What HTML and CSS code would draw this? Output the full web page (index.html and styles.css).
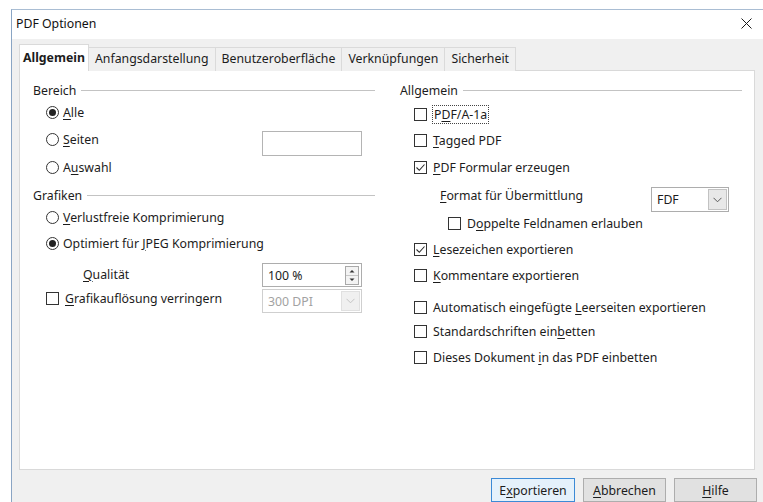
FILE: index.html
```html
<!DOCTYPE html>
<html lang="de">
<head>
<meta charset="utf-8">
<title>PDF Optionen</title>
<link rel="stylesheet" href="styles.css">
</head>
<body>
<div class="window">
  <div class="titlebar">
    <span class="title">PDF Optionen</span>
    <svg class="close" width="11" height="11" viewBox="0 0 11 11"><path d="M0.5 0.5 L10.5 10.5 M10.5 0.5 L0.5 10.5" stroke="#1a1a1a" stroke-width="1" fill="none"/></svg>
  </div>

  <div class="tabs">
    <div class="tab active">Allgemein</div>
    <div class="tab">Anfangsdarstellung</div>
    <div class="tab">Benutzeroberfläche</div>
    <div class="tab">Verknüpfungen</div>
    <div class="tab">Sicherheit</div>
  </div>

  <div class="panel">
    <!-- Bereich / Grafiken -->
    <div class="col col-left">
      <div class="heading full"><span>Bereich</span><i></i></div>
      <label class="opt radio-opt full"><span class="rb on"></span><span><u>A</u>lle</span></label>
      <label class="opt radio-opt lead"><span class="rb"></span><span><u>S</u>eiten</span></label>
      <div class="textbox pages"></div>
      <label class="opt radio-opt full"><span class="rb"></span><span>A<u>u</u>swahl</span></label>
      <div class="heading full"><span>Grafiken</span><i></i></div>
      <label class="opt radio-opt full"><span class="rb"></span><span><u>V</u>erlustfreie Komprimierung</span></label>
      <label class="opt radio-opt full"><span class="rb on"></span><span>Optimiert für <u>J</u>PEG Komprimierung</span></label>
      <div class="opt quality lead"><span><u>Q</u>ualität</span></div>
      <div class="spin">
        <span>100 %</span>
        <svg class="spin-btns" width="14" height="19" viewBox="0 0 14 19">
          <rect x="0.5" y="0.5" width="13" height="18" fill="#f3f3f3" stroke="#a9a9a9"/>
          <path d="M1 9.5 H13" stroke="#c8c8c8"/>
          <path d="M4.5 6.5 L7 4 L9.5 6.5 Z" fill="#333"/>
          <path d="M4.5 12.5 L7 15 L9.5 12.5 Z" fill="#333"/>
        </svg>
      </div>
      <label class="opt check-opt lead"><span class="cb"></span><span><u>G</u>rafikauflösung verringern</span></label>
      <div class="combo disabled dpi">
        <span>300 DPI</span>
        <span class="combo-btn"><svg width="9" height="6" viewBox="0 0 9 6"><path d="M0.5 0.8 L4.5 4.8 L8.5 0.8" stroke="#c4c4c4" fill="none"/></svg></span>
      </div>
    </div>

    <!-- Allgemein -->
    <div class="col col-right">
      <div class="heading full"><span>Allgemein</span><i></i></div>
      <label class="opt check-opt full"><span class="cb"></span><span class="focus">P<u>D</u>F/A-1a</span></label>
      <label class="opt check-opt full"><span class="cb"></span><span><u>T</u>agged PDF</span></label>
      <label class="opt check-opt full"><span class="cb on"><svg width="11" height="11" viewBox="0 0 11 11"><path d="M1.5 5.5 L4.3 8.3 L9.5 2.5" stroke="#2b2b2b" stroke-width="1.1" fill="none"/></svg></span><span><u>P</u>DF Formular erzeugen</span></label>
      <div class="opt format lead"><span><u>F</u>ormat für Übermittlung</span></div>
      <div class="combo fdf">
        <span>FDF</span>
        <span class="combo-btn"><svg width="9" height="6" viewBox="0 0 9 6"><path d="M0.5 0.8 L4.5 4.8 L8.5 0.8" stroke="#5a5a5a" fill="none"/></svg></span>
      </div>
      <label class="opt check-opt sub full"><span class="cb"></span><span>D<u>o</u>ppelte Feldnamen erlauben</span></label>
      <label class="opt check-opt full"><span class="cb on"><svg width="11" height="11" viewBox="0 0 11 11"><path d="M1.5 5.5 L4.3 8.3 L9.5 2.5" stroke="#2b2b2b" stroke-width="1.1" fill="none"/></svg></span><span><u>L</u>esezeichen exportieren</span></label>
      <label class="opt check-opt full"><span class="cb"></span><span><u>K</u>ommentare exportieren</span></label>
      <label class="opt check-opt full"><span class="cb"></span><span>Automatisch eingefügte <u>L</u>eerseiten exportieren</span></label>
      <label class="opt check-opt full"><span class="cb"></span><span>Standardschriften ein<u>b</u>etten</span></label>
      <label class="opt check-opt full"><span class="cb"></span><span>Dieses Dokument <u>i</u>n das PDF einbetten</span></label>
    </div>
  </div>

  <div class="footer">
    <button class="btn default">E<u>x</u>portieren</button>
    <button class="btn"><u>A</u>bbrechen</button>
    <button class="btn"><u>H</u>ilfe</button>
  </div>
</div>
</body>
</html>
```

FILE: styles.css
```css
html, body {
  margin: 0;
  height: 502px;
  overflow: hidden;
  background: #ffffff;
}

body {
  font-family: "Noto Sans", "Open Sans", "DejaVu Sans", sans-serif;
  font-size: 12.3px;
  color: #1c1c1c;
}

u {
  text-decoration-thickness: 1px;
  text-underline-offset: 2px;
}

/* dialog frame */
.window {
  margin: 9px 0 0 11px;
  height: 493px;
  border-left: 1px solid #8aa5c4;
  border-top: 1px solid #a9bdd3;
  background: #f0f0f0;
  box-sizing: border-box;
}

.titlebar {
  height: 29px;
  background: #ffffff;
  display: flex;
  align-items: center;
  justify-content: space-between;
  padding: 0 11px 2px 4px;
  box-sizing: border-box;
}

.title {
  color: #111;
}

/* tab strip */
.tabs {
  display: flex;
  align-items: flex-end;
  height: 27px;
  margin: 5px 0 0 7px;
}

.tab {
  height: 24px;
  padding: 0 6px 2px;
  display: flex;
  align-items: center;
  border: 1px solid #dadada;
  border-bottom: none;
  margin-left: -1px;
  background: #f0f0f0;
  box-sizing: border-box;
}

.tab:first-child {
  margin-left: 0;
}

.tab.active {
  height: 27px;
  padding: 0 3px 1px;
  background: #ffffff;
  font-weight: bold;
  position: relative;
  z-index: 1;
}

/* page */
.panel {
  margin: -1px 0 0 7px;
  width: 736px;
  height: 400px;
  border: 1px solid #d9d9d9;
  background: #ffffff;
  box-sizing: border-box;
  padding: 10px 12px 0 13px;
  display: flex;
  gap: 25px;
}

.col {
  width: 342px;
  display: grid;
  align-items: center;
}

.col-left {
  grid-template-columns: 229px 100px 1fr;
  grid-template-rows: 18px 27px 26px 30px 26px 18px 34px 28px 20px;
}

.col-right {
  grid-template-columns: 251px 78px 1fr;
  grid-template-rows: 18px 30px 22px 32px 24px 32px 20px 32px 32px 16px 36px;
}

.full {
  grid-column: 1 / -1;
}

.lead {
  grid-column: 1;
}

.heading {
  display: flex;
  align-items: center;
  gap: 5px;
}

.heading i {
  flex: 1;
  height: 1px;
  background: #c3c3c3;
}

.opt {
  display: flex;
  align-items: center;
  white-space: nowrap;
}

.radio-opt {
  padding-left: 13px;
  gap: 4px;
}

.check-opt {
  padding-left: 13px;
  gap: 6px;
}

.col-right .check-opt {
  padding-left: 14px;
  gap: 6px;
}

.col-right .check-opt.sub {
  padding-left: 48px;
}

.quality {
  padding-left: 50px;
}

.format {
  padding-left: 40px;
}

/* radio buttons */
.rb {
  width: 13px;
  height: 13px;
  border: 1px solid #333333;
  border-radius: 50%;
  box-sizing: border-box;
  background: #fff;
  display: flex;
  align-items: center;
  justify-content: center;
  flex: none;
}

.rb.on::after {
  content: "";
  width: 7px;
  height: 7px;
  border-radius: 50%;
  background: #222;
}

/* check boxes */
.cb {
  width: 13px;
  height: 13px;
  border: 1px solid #333333;
  box-sizing: border-box;
  background: #fff;
  display: flex;
  align-items: center;
  justify-content: center;
  flex: none;
}

.cb svg {
  display: block;
}

.focus {
  outline: 1px dotted #444;
  outline-offset: 0;
  padding: 0 1px;
}

/* inputs */
.textbox {
  border: 1px solid #b4b4b4;
  box-sizing: border-box;
  background: #fff;
}

.pages {
  grid-column: 2;
  align-self: start;
  margin-top: 5px;
  height: 25px;
}

.spin {
  grid-column: 2;
  align-self: start;
  margin-top: 3px;
  height: 24px;
  border: 1px solid #adadad;
  box-sizing: border-box;
  display: flex;
  align-items: center;
  padding: 0 2px 0 5px;
  background: #fff;
}

.spin-btns {
  margin-left: auto;
  display: block;
}

.combo {
  display: flex;
  align-items: stretch;
  height: 24px;
  border: 1px solid #adadad;
  box-sizing: border-box;
  background: #fff;
  align-self: start;
}

.combo > span:first-child {
  display: flex;
  align-items: center;
  padding-left: 5px;
  flex: 1;
}

.combo-btn {
  width: 17px;
  margin: 1px;
  display: flex;
  align-items: center;
  justify-content: center;
  background: #e8e8e8;
  border: 1px solid #c2c2c2;
}

.combo.disabled {
  border-color: #cfcfcf;
  color: #a2a2a2;
}

.combo.disabled .combo-btn {
  background: #f0f0f0;
  border-color: #e0e0e0;
}

.dpi {
  grid-column: 2;
  margin-top: 1px;
}

.fdf {
  grid-column: 2;
  margin-top: 4px;
  height: 25px;
}

/* button row */
.footer {
  width: 745px;
  display: flex;
  justify-content: flex-end;
  gap: 8px;
  padding-top: 8px;
}

.btn {
  width: 83px;
  height: 24px;
  border: 1px solid #adadad;
  background: #e1e1e1;
  font: inherit;
  color: #1c1c1c;
  padding: 0;
  margin: 0;
}

.btn.default {
  width: 84px;
  border-color: #3c8ad6;
  background: #e5f1fb;
}
```
